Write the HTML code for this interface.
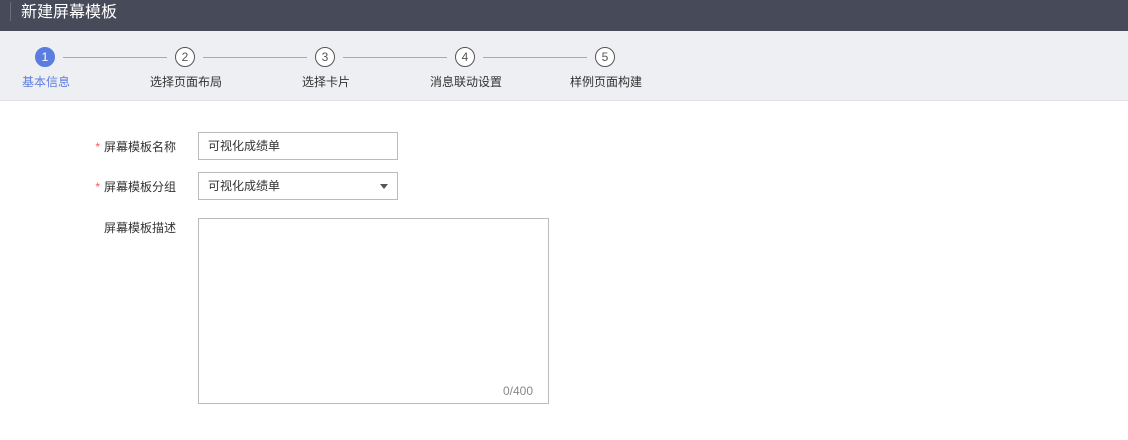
<!DOCTYPE html>
<html><head><meta charset="utf-8"><style>
*{box-sizing:border-box;margin:0;padding:0}
body{width:1128px;height:440px;background:#fff;font-family:"Liberation Sans","Noto Sans CJK SC",sans-serif;font-size:12px;color:#333;position:relative;overflow:hidden}
.hd{position:absolute;left:0;top:0;width:1128px;height:31px;background:#474b59}
.hd .bar{position:absolute;left:10px;top:2px;width:1px;height:19px;background:#6a6e7a}
.hd .t{position:absolute;left:21px;top:3px;font-size:16px;color:#fff;line-height:20px}
.steps{position:absolute;left:0;top:31px;width:1128px;height:70px;background:#eeeff2;border-bottom:1px solid #e2e3e6}
.c{position:absolute;top:16px;width:20px;height:20px;border:1px solid #555;border-radius:50%;background:#fff;text-align:center;line-height:18px;font-size:12px;color:#555}
.c.a{background:#5b7de0;border-color:#5b7de0;color:#fff}
.ln{position:absolute;top:26px;height:1px;background:#aaa;width:104px}
.lb{position:absolute;top:43px;width:140px;text-align:center;font-size:12px;color:#333;line-height:16px}
.lab{position:absolute;width:120px;text-align:right;font-size:12px;color:#333;line-height:16px;left:56px}
.lab i{color:#f25a5a;font-style:normal;margin-right:4px}
.in{position:absolute;left:198px;width:200px;height:28px;border:1px solid #bbb;padding-left:9px;line-height:26px;font-size:12px;color:#333}
.tri{position:absolute;right:9px;top:11px;width:0;height:0;border-left:4px solid transparent;border-right:4px solid transparent;border-top:5px solid #555}
</style></head><body>
<div class="hd"><div class="bar"></div><div class="t">新建屏幕模板</div></div>
<div class="steps">
<div class="c a" style="left:35px">1</div>
<div class="ln" style="left:63px"></div>
<div class="c" style="left:175px">2</div>
<div class="ln" style="left:203px"></div>
<div class="c" style="left:315px">3</div>
<div class="ln" style="left:343px"></div>
<div class="c" style="left:455px">4</div>
<div class="ln" style="left:483px"></div>
<div class="c" style="left:595px">5</div>
<div class="lb" style="left:-24px;color:#5b7de0">基本信息</div>
<div class="lb" style="left:116px">选择页面布局</div>
<div class="lb" style="left:256px">选择卡片</div>
<div class="lb" style="left:396px">消息联动设置</div>
<div class="lb" style="left:536px">样例页面构建</div>
</div>
<div class="lab" style="top:139px"><i>*</i>屏幕模板名称</div>
<div class="in" style="top:132px">可视化成绩单</div>
<div class="lab" style="top:179px"><i>*</i>屏幕模板分组</div>
<div class="in" style="top:172px">可视化成绩单<div class="tri"></div></div>
<div class="lab" style="top:220px">屏幕模板描述</div>
<div class="in" style="top:218px;width:351px;height:186px"><span style="position:absolute;right:15px;bottom:5px;line-height:14px;color:#888">0/400</span></div>
</body></html>
